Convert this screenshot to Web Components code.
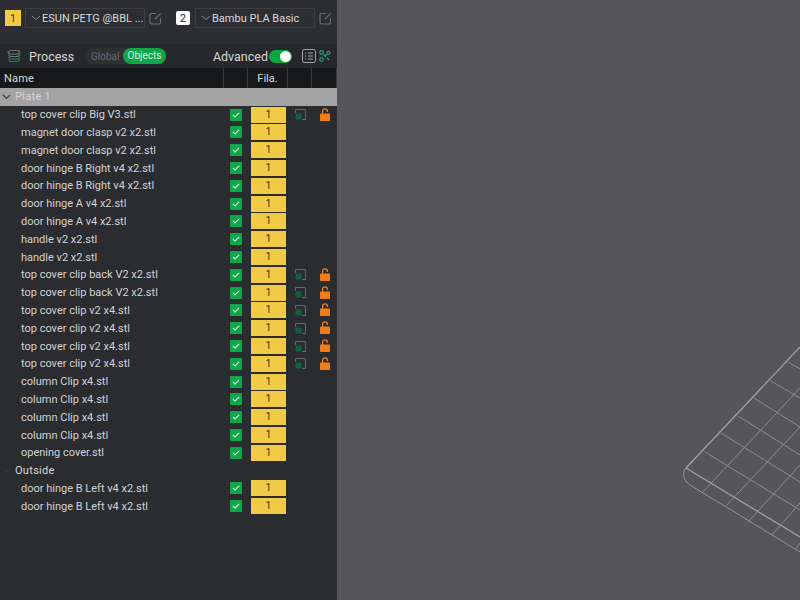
<!DOCTYPE html>
<html>
<head>
<meta charset="utf-8">
<title>Objects</title>
<style>
    html, body { margin: 0; height: 100%; overflow: hidden; background: #55555b; }
    body { font-family: Roboto, "Noto Sans", sans-serif; color: #d6d6d8; }
</style>
</head>
<body>
<slicer-app>
    <filament-bar slot="top"></filament-bar>
    <process-bar slot="top"></process-bar>
    <object-table slot="top">
        <group-row name="Plate 1" selected></group-row>
        <object-row name="top cover clip Big V3.stl" extras="open"></object-row>
        <object-row name="magnet door clasp v2 x2.stl"></object-row>
        <object-row name="magnet door clasp v2 x2.stl"></object-row>
        <object-row name="door hinge B Right v4 x2.stl"></object-row>
        <object-row name="door hinge B Right v4 x2.stl"></object-row>
        <object-row name="door hinge A v4 x2.stl"></object-row>
        <object-row name="door hinge A v4 x2.stl"></object-row>
        <object-row name="handle v2 x2.stl"></object-row>
        <object-row name="handle v2 x2.stl"></object-row>
        <object-row name="top cover clip back V2 x2.stl" extras="open"></object-row>
        <object-row name="top cover clip back V2 x2.stl" extras="open"></object-row>
        <object-row name="top cover clip v2 x4.stl" extras="open"></object-row>
        <object-row name="top cover clip v2 x4.stl" extras="open"></object-row>
        <object-row name="top cover clip v2 x4.stl" extras="open"></object-row>
        <object-row name="top cover clip v2 x4.stl" extras="open"></object-row>
        <object-row name="column Clip x4.stl"></object-row>
        <object-row name="column Clip x4.stl"></object-row>
        <object-row name="column Clip x4.stl"></object-row>
        <object-row name="column Clip x4.stl"></object-row>
        <object-row name="opening cover.stl"></object-row>
        <group-row name="Outside"></group-row>
        <object-row name="door hinge B Left v4 x2.stl"></object-row>
        <object-row name="door hinge B Left v4 x2.stl"></object-row>
    </object-table>
    <plate-view slot="view"></plate-view>
</slicer-app>

<script>
class SlicerApp extends HTMLElement {
    constructor() {
        super();
        this.attachShadow({ mode: 'open' });
        this.shadowRoot.innerHTML = `
            <style>
                :host { display: flex; width: 800px; height: 600px; }
                .side { width: 337px; flex: none; background: #2b2c30; display: flex; flex-direction: column; }
                .view { flex: 1; position: relative; }
            </style>
            <div class="side"><slot name="top"></slot></div>
            <div class="view"><slot name="view"></slot></div>
        `;
    }
}

class FilamentBar extends HTMLElement {
    constructor() {
        super();
        this.attachShadow({ mode: 'open' });
        this.shadowRoot.innerHTML = `
            <style>
                :host { display: flex; height: 44px; box-sizing: border-box; padding: 8px 0 0 5px; background: #2d2e33; }
            </style>
            <filament-pick num="1" name="ESUN PETG @BBL ..." color="#f0cb45" ink="#3a3420"></filament-pick>
            <filament-pick num="2" name="Bambu PLA Basic" color="#ffffff" ink="#222222" style="margin-left:13px"></filament-pick>
        `;
    }
}

class FilamentPick extends HTMLElement {
    constructor() {
        super();
        this.attachShadow({ mode: 'open' });
    }

    connectedCallback() {
        const num = this.getAttribute('num');
        const name = this.getAttribute('name');
        const color = this.getAttribute('color');
        const ink = this.getAttribute('ink');
        const square = num === '1';
        this.shadowRoot.innerHTML = `
            <style>
                :host { display: flex; align-items: center; height: 20px; }
                .num { width: ${square ? 16 : 14}px; height: ${square ? 16 : 14}px; background: ${color}; color: ${ink};
                       border-radius: ${square ? 0 : 2}px; font-size: 10.5px; display: grid; place-items: center; margin-left: ${square ? 0 : 1}px; }
                .box { width: 120px; height: 20px; box-sizing: border-box; margin-left: ${square ? 4 : 5}px; border: 1px solid #3d3e43;
                       display: flex; align-items: center; padding-left: 5px; font-size: 11px; color: #d8d8da; white-space: nowrap; }
                svg.chev { margin-right: 1px; flex: none; }
                svg.edit { margin-left: 4px; flex: none; }
            </style>
            <span class="num">${num}</span>
            <div class="box">
                <svg class="chev" width="10" height="6" viewBox="0 0 10 6" fill="none" stroke="#8a8b90"><path d="M1 1l4 3.5L9 1"/></svg>
                ${name}
            </div>
            <svg class="edit" width="13" height="13" viewBox="0 0 13 13" fill="none" stroke="#6e6f74" stroke-width="1.1">
                <path d="M7 1.5H2.5a1.5 1.5 0 0 0-1.5 1.5v7.5A1.5 1.5 0 0 0 2.5 12h7.5a1.5 1.5 0 0 0 1.5-1.5V6"/>
                <path d="M6 7l5.5-5.5"/>
            </svg>
        `;
    }
}

class ProcessBar extends HTMLElement {
    constructor() {
        super();
        this.attachShadow({ mode: 'open' });
        this.shadowRoot.innerHTML = `
            <style>
                :host { display: flex; align-items: center; height: 24px; background: #27282c; font-size: 12px; }
                .stack { margin-left: 7px; flex: none; }
                .title { margin-left: 8px; font-size: 12.5px; color: #d4d4d6; width: 56px; }
                .tabs { display: flex; align-items: center; height: 16px; border-radius: 8px; background: #2f3034; font-size: 10px; padding-left: 6px; }
                .global { color: #66676b; width: 32px; }
                .objects { background: #10a64a; color: #d7f0df; border-radius: 8px; height: 16px; line-height: 16px; padding: 0 4.5px; }
                .adv { margin-left: auto; font-size: 12.5px; color: #d4d4d6; }
                .toggle { width: 23px; height: 13px; border-radius: 7px; background: #07a83f; margin-left: 1px; display: flex; justify-content: flex-end; align-items: center; padding-right: 1px; box-sizing: border-box; }
                .toggle i { width: 11px; height: 11px; border-radius: 50%; background: #fff; }
                .list { margin-left: 10px; flex: none; }
                .tree { margin-left: 3px; margin-right: 6px; flex: none; }
            </style>
            <svg class="stack" width="14" height="14" viewBox="0 0 14 14" fill="none" stroke-width="1.2">
                <path d="M3 1.5h8.5L13 3l-2 2H3L1 3.5z" stroke="#717276"/>
                <path d="M1.5 5.5L3 7.5h8l2-2" stroke="#6b7d72"/>
                <path d="M1.5 8L3 10h8l2-2" stroke="#1f8a55"/>
                <path d="M1.5 10.5L3 12.5h8l2-2" stroke="#14804a"/>
            </svg>
            <span class="title">Process</span>
            <div class="tabs"><span class="global">Global</span><span class="objects">Objects</span></div>
            <span class="adv">Advanced</span>
            <div class="toggle"><i></i></div>
            <svg class="list" width="14" height="14" viewBox="0 0 14 14" fill="none" stroke="#a6a7aa">
                <rect x=".5" y=".5" width="13" height="13" rx="2"/>
                <path d="M3 4h1M6 4h5M3 7h1M6 7h5M3 10h1M6 10h5"/>
            </svg>
            <svg class="tree" width="12" height="12" viewBox="0 0 12 12" fill="none" stroke="#2c9a6c" stroke-width="1.2">
                <circle cx="2.5" cy="2.5" r="1.8"/><circle cx="9.5" cy="2.8" r="1.5"/><circle cx="2.5" cy="9.5" r="1.8"/>
                <path d="M4 4l3 3M6 6l2-2M8 8l2 2"/>
            </svg>
        `;
    }
}

const COLUMNS = '224px 24px 40px 24px 25px';

class ObjectTable extends HTMLElement {
    constructor() {
        super();
        this.attachShadow({ mode: 'open' });
        this.shadowRoot.innerHTML = `
            <style>
                :host { display: block; flex: 1; background: #2b2c30; font-size: 11px; }
                .head { display: grid; grid-template-columns: ${COLUMNS}; height: 20px; background: #17181a; color: #d8d8da; }
                .head div { display: flex; align-items: center; border-right: 1px solid #3a3b3f; box-sizing: border-box; }
                .head .name { padding-left: 4px; letter-spacing: .2px; }
                .head .fila { justify-content: center; }
            </style>
            <div class="head">
                <div class="name">Name</div><div></div><div class="fila">Fila.</div><div></div><div></div>
            </div>
            <slot></slot>
        `;
    }
}

class GroupRow extends HTMLElement {
    constructor() {
        super();
        this.attachShadow({ mode: 'open' });
    }

    connectedCallback() {
        const selected = this.hasAttribute('selected');
        this.shadowRoot.innerHTML = `
            <style>
                :host { display: flex; align-items: center; height: 17.8px; font-size: 11px;
                        background: ${selected ? '#a3a3a3' : 'transparent'}; color: ${selected ? '#d5d5d5' : '#d6d6d8'}; }
                svg { margin-left: 2px; flex: none; }
                span { margin-left: 4px; letter-spacing: .3px; }
            </style>
            <svg width="9" height="6" viewBox="0 0 9 6" fill="none" stroke="${selected ? '#3a3a3a' : '#35363a'}" stroke-width="1.2"><path d="M1 1l3.5 3.5L8 1"/></svg>
            <span>${this.getAttribute('name')}</span>
        `;
    }
}

class ObjectRow extends HTMLElement {
    constructor() {
        super();
        this.attachShadow({ mode: 'open' });
    }

    connectedCallback() {
        const extras = this.getAttribute('extras') === 'open' ? `
            <svg class="clone" width="11" height="11" viewBox="0 0 11 11" fill="none">
                <path d="M.5 .5h8.5a1.5 1.5 0 0 1 1.5 1.5v8.5h-3.5M.5 .5v3.5" stroke="#66676c" stroke-width="1.1"/>
                <rect x=".5" y="4.5" width="6" height="6" rx="1" fill="#12613a"/>
            </svg>
            <svg class="lock" width="10" height="13" viewBox="0 0 10 13" fill="none">
                <path d="M2.6 6V3.3a2.4 2.4 0 0 1 4.8 0V4" stroke="#ef7d1a" stroke-width="1.3"/>
                <rect x="0" y="5.5" width="10" height="7.5" rx=".8" fill="#ef7d1a"/>
            </svg>` : '';
        this.shadowRoot.innerHTML = `
            <style>
                :host { display: grid; grid-template-columns: ${COLUMNS}; align-items: center; height: 17.8px; font-size: 11px; color: #d2d2d4; }
                .name { padding-left: 21px; white-space: nowrap; }
                .check { justify-self: center; width: 12px; height: 12px; background: #10a64a; border-radius: 1px; display: grid; place-items: center; }
                .fila { margin-left: 3px; width: 35px; height: 16px; background: #f0cb45; color: #3a3420; text-align: center; line-height: 16px; font-size: 10.5px; }
                .clone { justify-self: center; margin-left: 1px; }
                .lock { justify-self: center; margin-top: -1px; margin-left: 1px; }
            </style>
            <div class="name">${this.getAttribute('name')}</div>
            <div class="check">
                <svg width="8" height="6" viewBox="0 0 8 6" fill="none" stroke="#d5f2df" stroke-width="1.1"><path d="M.8 2.8L3 5l4.2-4.2"/></svg>
            </div>
            <div class="fila">1</div>
            ${extras}
        `;
    }
}

class PlateView extends HTMLElement {
    constructor() {
        super();
        this.attachShadow({ mode: 'open' });
    }

    connectedCallback() {
        // grid lines read off the reference, in page pixels
        const thin = [
            [702, 493, 800, 388], [725, 507, 800, 427], [748, 522, 800, 465], [772, 535, 800, 503], [795, 550, 800, 543],
            [705, 452, 800, 510], [721, 433, 800, 482], [738, 416, 800, 455], [754, 398, 800, 427], [771, 381, 800, 398], [788, 362, 800, 369]
        ];
        const lines = thin.map(([a, b, c, d]) => `<line x1="${a - 337}" y1="${b}" x2="${c - 337}" y2="${d}"/>`).join('');
        this.shadowRoot.innerHTML = `
            <style>
                :host { display: block; position: absolute; inset: 0; }
                svg { position: absolute; left: 0; top: 0; }
            </style>
            <svg width="463" height="600" viewBox="0 0 463 600" fill="none">
                <g stroke="#8c8c90" stroke-width="1">${lines}</g>
                <path d="M349 468L463 347" stroke="#a0a0a4" stroke-width="1.3"/>
                <path d="M349 468L463 537" stroke="#a0a0a4" stroke-width="1.3"/>
                <path d="M349 468C345 473 346 480 353 485L463 552" stroke="#939397" stroke-width="1"/>
            </svg>
        `;
    }
}

customElements.define('slicer-app', SlicerApp);
customElements.define('filament-bar', FilamentBar);
customElements.define('filament-pick', FilamentPick);
customElements.define('process-bar', ProcessBar);
customElements.define('object-table', ObjectTable);
customElements.define('group-row', GroupRow);
customElements.define('object-row', ObjectRow);
customElements.define('plate-view', PlateView);
</script>
</body>
</html>
